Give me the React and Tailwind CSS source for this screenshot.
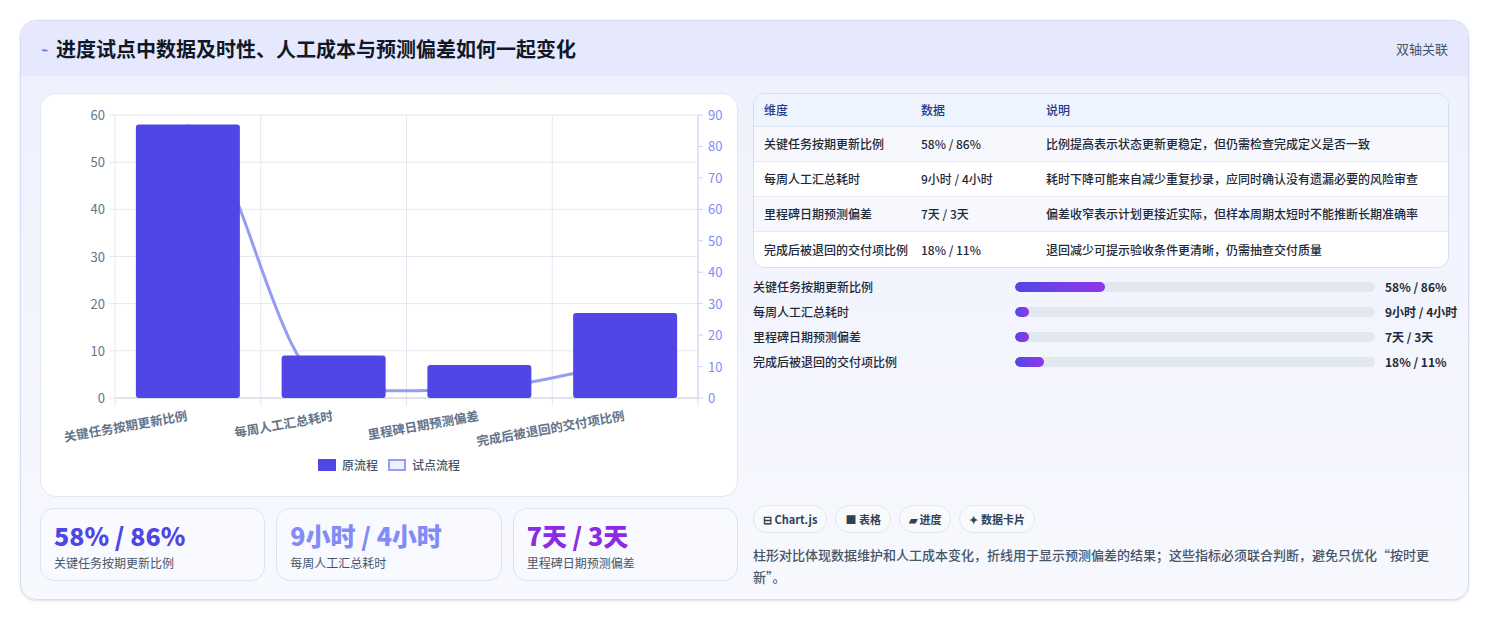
const F = { fontFamily: '"Noto Sans CJK SC", "Noto Sans", sans-serif' };

const rows = [
  ["关键任务按期更新比例", "58% / 86%", "比例提高表示状态更新更稳定，但仍需检查完成定义是否一致"],
  ["每周人工汇总耗时", "9小时 / 4小时", "耗时下降可能来自减少重复抄录，应同时确认没有遗漏必要的风险审查"],
  ["里程碑日期预测偏差", "7天 / 3天", "偏差收窄表示计划更接近实际，但样本周期太短时不能推断长期准确率"],
  ["完成后被退回的交付项比例", "18% / 11%", "退回减少可提示验收条件更清晰，仍需抽查交付质量"],
];
const fills = ["25%", "4%", "4%", "8%"];

function Chart() {
  const L = 74, R = 657, T = 21, B = 304;
  const cw = (R - L) / 4;
  const yl = (v) => B - (v / 60) * (B - T);
  const yr = (v) => B - (v / 90) * (B - T);
  const bars = [58, 9, 7, 18];
  const line = [86, 3, 3, 11];
  const xs = [0, 1, 2, 3].map((i) => L + cw * i + cw / 2);
  const p = line.map((v, i) => [xs[i], yr(v)]);
  const d = `M${p[0][0]},${p[0][1]} C${p[0][0] + 50},${p[0][1]} ${p[1][0] - 60},${p[1][1] - 5} ${p[1][0]},${p[1][1]} C${p[1][0] + 50},${p[1][1] + 4} ${p[2][0] - 50},${p[2][1] + 2} ${p[2][0]},${p[2][1]} C${p[2][0] + 50},${p[2][1] - 3} ${p[3][0] - 50},${p[3][1] + 8} ${p[3][0]},${p[3][1]}`;
  const labels = ["关键任务按期更新比例", "每周人工汇总耗时", "里程碑日期预测偏差", "完成后被退回的交付项比例"];
  return (
    <svg width="697" height="362" style={F}>
      {[0, 10, 20, 30, 40, 50, 60].map((v) => (
        <g key={v}>
          <line x1={L - 6} x2={R} y1={yl(v)} y2={yl(v)} stroke="#e2e8f0" />
          <text x={L - 10} y={yl(v) + 5} textAnchor="end" fontSize="13" fill="#64748b">{v}</text>
        </g>
      ))}
      {[0, 10, 20, 30, 40, 50, 60, 70, 80, 90].map((v) => (
        <g key={v}>
          <line x1={R} x2={R + 5} y1={yr(v)} y2={yr(v)} stroke="#c7d2fe" />
          <text x={R + 10} y={yr(v) + 5} fontSize="13" fill="#818cf8">{v}</text>
        </g>
      ))}
      {[0, 1, 2, 3, 4].map((i) => (
        <line key={i} x1={L + cw * i} x2={L + cw * i} y1={T} y2={B + 8} stroke="#e2e8f0" />
      ))}
      <line x1={L} x2={R} y1={B} y2={B} stroke="#cbd5e1" />
      <line x1={R} x2={R} y1={T} y2={B} stroke="#c7d2fe" />
      <path d={d} fill="none" stroke="#949cf5" strokeWidth="3" />
      <circle cx={p[0][0]} cy={p[0][1]} r="3" fill="#818cf8" />
      {bars.map((v, i) => (
        <rect key={i} x={xs[i] - 52} y={yl(v)} width="104" height={B - yl(v)} rx="3" fill="#4f46e5" />
      ))}
      {labels.map((t, i) => (
        <text key={i} x={xs[i]} y={B + 22} textAnchor="end" fontSize="12.5" fontWeight="600" fill="#64748b" transform={`rotate(-10 ${xs[i]} ${B + 22})`}>{t}</text>
      ))}
    </svg>
  );
}

export default function App() {
  return (
    <div className="w-[1489px] h-[621px] bg-white pt-[20px] px-[20px]" style={F}>
      <div className="w-[1449px] h-[580px] rounded-[16px] border border-[#d6dcf5] overflow-hidden bg-gradient-to-b from-[#eef0fd] to-[#f8f9fe] shadow-sm">
        <div className="h-[55px] bg-[#e6e9fd] flex items-center justify-between px-[20px]">
          <div className="flex items-center gap-[8px]">
            <span className="text-[#6366f1] text-[12px]">⌁</span>
            <span className="text-[20px] font-bold text-[#111827]">进度试点中数据及时性、人工成本与预测偏差如何一起变化</span>
          </div>
          <span className="text-[13px] text-[#475569]">双轴关联</span>
        </div>
        <div className="flex gap-[15px] px-[19px] pt-[17px]">
          <div className="w-[698px] flex flex-col gap-[11px]">
            <div className="h-[404px] bg-white rounded-[16px] border border-[#e2e8f0] flex flex-col items-center">
              <div className="self-start"><Chart /></div>
              <div className="flex items-center gap-[6px] text-[12px] text-[#475569] font-medium">
                <span className="w-[18px] h-[12px] bg-[#4f46e5]"></span>原流程
                <span className="w-[18px] h-[12px] bg-[#eef0fd] border-2 border-[#949cf5] ml-[4px]"></span>试点流程
              </div>
            </div>
            <div className="flex gap-[11px]">
              {[["58% / 86%", "text-[#4f46e5]", "关键任务按期更新比例"], ["9小时 / 4小时", "text-[#818cf8]", "每周人工汇总耗时"], ["7天 / 3天", "text-[#8b2be2]", "里程碑日期预测偏差"]].map(([v, c, l]) => (
                <div key={l} className="flex-1 h-[73px] rounded-[14px] border border-[#dbe3f5] bg-[#f8faff] px-[13px] pt-[9px]">
                  <div className={`text-[25px] font-extrabold leading-[34px] ${c}`}>{v}</div>
                  <div className="text-[12px] text-[#475569] mt-[2px]">{l}</div>
                </div>
              ))}
            </div>
          </div>
          <div className="w-[698px] flex flex-col">
            <div className="rounded-[12px] border border-[#d6dcf0] overflow-hidden bg-[#f8faff] text-[12px] font-medium">
              <div className="flex h-[33px] items-center bg-[#eef4fe] text-[#1e3a8a] border-b border-[#dbe3f5]">
                <div className="w-[167px] pl-[10px]">维度</div><div className="w-[125px]">数据</div><div>说明</div>
              </div>
              {rows.map((r, i) => (
                <div key={i} className={`flex h-[35px] items-center text-[#1f2937] ${i < 3 ? "border-b border-[#e5eaf3]" : ""} ${i % 2 ? "bg-white" : "bg-[#f6f8fe]"}`}>
                  <div className="w-[167px] pl-[10px]">{r[0]}</div><div className="w-[125px]">{r[1]}</div><div>{r[2]}</div>
                </div>
              ))}
            </div>
            <div className="mt-[10px] flex flex-col gap-[7px] text-[12px] text-[#1f2937] font-medium">
              {rows.map((r, i) => (
                <div key={i} className="flex items-center h-[18px]">
                  <div className="w-[262px]">{r[0]}</div>
                  <div className="flex-1 h-[10px] rounded-full bg-[#e2e8f0] overflow-hidden">
                    <div className="h-full rounded-full bg-gradient-to-r from-[#4f46e5] to-[#9333ea]" style={{ width: fills[i], minWidth: 12 }}></div>
                  </div>
                  <div className="ml-[10px] font-bold w-[64px] whitespace-nowrap">{r[1]}</div>
                </div>
              ))}
            </div>
            <div className="mt-[134px] flex gap-[8px] text-[11px] font-bold text-[#334155]">
              {["⊟ Chart.js", "■ 表格", "▰ 进度", "✦ 数据卡片"].map((t) => (
                <span key={t} className="h-[28px] px-[9px] flex items-center rounded-full border border-[#e2e8f0] bg-[#f8fafc]">{t}</span>
              ))}
            </div>
            <p className="mt-[11px] text-[13px] leading-[22px] text-[#475569] font-medium pr-[10px]">柱形对比体现数据维护和人工成本变化，折线用于显示预测偏差的结果；这些指标必须联合判断，避免只优化“按时更新”。</p>
          </div>
        </div>
      </div>
    </div>
  );
}
